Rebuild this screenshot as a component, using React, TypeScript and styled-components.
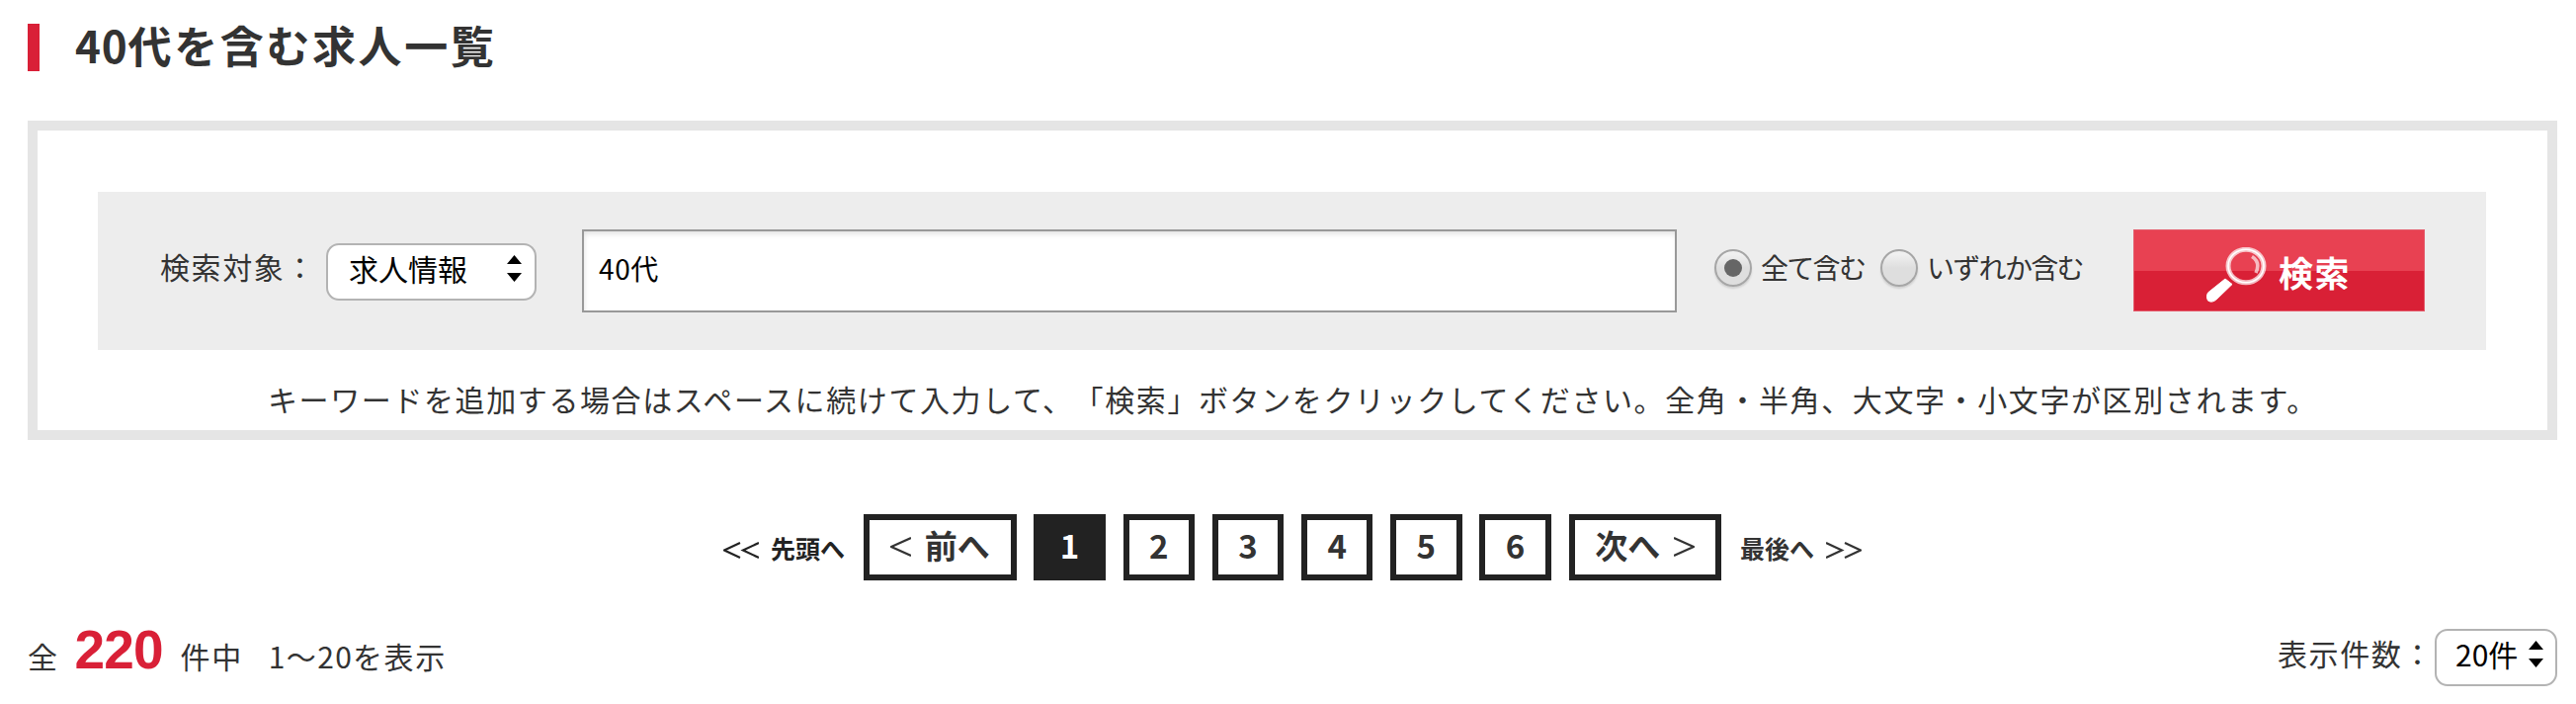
import { useState } from "react";
import styled, { createGlobalStyle } from "styled-components";

const PAGES = [1, 2, 3, 4, 5, 6];

const GlobalStyle = createGlobalStyle`
  * {
    box-sizing: border-box;
  }

  body {
    margin: 0;
    background: #fff;
    color: #333;
    font-family: "Noto Sans CJK JP", sans-serif;
    font-size: 30px;
    letter-spacing: 1.6px;
    text-spacing-trim: space-all;
  }
`;

const Page = styled.main`
  width: 2560px;
  height: 712px;
  margin-left: 28px;
  padding-top: 24px;
  overflow: hidden;
  white-space: nowrap;
`;

const Title = styled.h1`
  height: 48px;
  margin: 0;
  padding-left: 36px;
  border-left: 12px solid #d92037;
  font-size: 44px;
  font-weight: 700;
  line-height: 43px;
  letter-spacing: 2.6px;
`;

const TitleNumber = styled.span`
  letter-spacing: 0.8px;
`;

const SearchPanel = styled.section`
  height: 323px;
  margin-top: 50px;
  padding: 62px 62px 0 61px;
  border: 10px solid #e5e5e5;
`;

const SearchForm = styled.form`
  display: flex;
  align-items: center;
  height: 160px;
  padding-left: 63px;
  background: #ededed;
`;

const Label = styled.label<{ $width: number }>`
  flex: none;
  width: ${({ $width }) => $width}px;
  line-height: 44px;
`;

const TargetLabel = styled(Label)`
  margin-bottom: 10px;
`;

const SelectWrapper = styled.div<{ $width: number; $arrowRight: number }>`
  position: relative;
  flex: none;
  width: ${({ $width }) => $width}px;
  height: 58px;

  svg {
    position: absolute;
    top: 12px;
    right: ${({ $arrowRight }) => $arrowRight}px;
    pointer-events: none;
  }
`;

const StyledSelect = styled.select`
  appearance: none;
  width: 100%;
  height: 100%;
  margin: 0;
  padding: 0 0 8px 21px;
  border: 2px solid #b3b3b3;
  border-radius: 13px;
  background: #fff;
  color: #000;
  font-family: inherit;
  font-size: 30px;
  letter-spacing: 0;
`;

const TargetSelect = styled(SelectWrapper)`
  margin-top: 2px;
`;

const KeywordInput = styled.input`
  flex: none;
  width: 1108px;
  height: 84px;
  margin: 0 0 0 46px;
  padding: 0 15px 6px;
  border: 2px solid #999;
  border-radius: 0;
  outline: none;
  background: #fff;
  box-shadow: inset 0 5px 6px -3px #ddd, inset 3px 0 5px -2px #eee;
  color: #000;
  font-family: inherit;
  font-size: 28px;
  letter-spacing: 0.6px;
`;

const RadioLabel = styled.label<{ $width: number }>`
  display: flex;
  flex: none;
  align-items: center;
  width: ${({ $width }) => $width}px;
  height: 38px;
  margin-bottom: 6px;
  font-size: 28px;
  letter-spacing: -1.7px;
`;

const Radio = styled.input`
  appearance: none;
  display: flex;
  flex: none;
  align-items: center;
  justify-content: center;
  width: 38px;
  height: 38px;
  margin: 0 9px 0 0;
  border: 2px solid #a6a6a6;
  border-radius: 50%;
  background: linear-gradient(#f0f0f0 10%, #dedede 50%, #dedede);
  box-shadow: 0 2px 2px rgb(0 0 0 / 12%);

  &:checked::before {
    content: "";
    width: 18px;
    height: 18px;
    border-radius: 50%;
    background: #666;
  }
`;

const RadioText = styled.span`
  line-height: 34px;
  margin-bottom: 2px;
`;

const SearchButton = styled.button`
  display: flex;
  flex: none;
  width: 295px;
  height: 83px;
  margin: 0 0 1px 43px;
  padding: 17px 0 0 73px;
  border: 1px solid #e45c6c;
  background: linear-gradient(#e84152 0 41px, #d92036 41px);
  color: #fff;
  font-family: inherit;
  font-size: 35px;
  font-weight: 700;
  letter-spacing: 1.5px;
  cursor: pointer;

  span {
    margin: 1px 0 0 12px;
    line-height: 48px;
  }
`;

const Hint = styled.p`
  margin: 27px 0 0 172px;
  line-height: 44px;
`;

const Pagination = styled.nav`
  display: flex;
  align-items: center;
  height: 67px;
  margin: 75px 0 0 704px;
  letter-spacing: 0;
`;

const EdgeLink = styled.a<{ $width: number; $color: string }>`
  display: flex;
  flex: none;
  justify-content: space-between;
  width: ${({ $width }) => $width}px;
  color: ${({ $color }) => $color};
  font-size: 25px;
  font-weight: 700;
  line-height: 36px;
`;

const Chevron = styled.svg`
  flex: none;
  fill: none;
  stroke: currentColor;
  stroke-width: 2.2;
`;

const PageList = styled.div`
  display: flex;
  gap: 17.8px;
  margin: 0 19px;
`;

const PageLink = styled.a<{ $wide?: boolean; $active?: boolean }>`
  display: flex;
  align-items: center;
  justify-content: center;
  gap: 14px;
  width: ${({ $wide }) => ($wide ? 154.6 : 72.4)}px;
  height: 67px;
  padding-bottom: 6px;
  border: 6px solid #222;
  background: ${({ $active }) => ($active ? "#222" : "#fff")};
  color: ${({ $active }) => ($active ? "#fff" : "#333")};
  font-size: 33px;
  font-weight: 700;
  line-height: 40px;
`;

const ResultBar = styled.div`
  display: flex;
  align-items: flex-start;
  justify-content: space-between;
  height: 58px;
  margin-top: 48px;
`;

const Count = styled.p`
  display: flex;
  align-items: baseline;
  margin: 0;
  line-height: 44px;
`;

const Total = styled.strong`
  width: 88px;
  margin: 0 19px 0 16px;
  color: #d92037;
  font-family: "Liberation Sans", sans-serif;
  font-size: 55px;
  letter-spacing: -0.9px;
`;

const Range = styled.span`
  margin-left: 26px;
`;

const Digits = styled.span`
  letter-spacing: 1.2px;
`;

const PerPage = styled.div`
  display: flex;
  margin-top: 1px;

  label {
    padding-top: 2px;
  }

  select {
    padding-left: 19px;
  }
`;

const SelectArrows = () => (
  <svg width="15" height="27" viewBox="0 0 15 27">
    <path d="M7.5 0L15 9H0zM7.5 27L15 18H0z" />
  </svg>
);

const SearchIcon = () => (
  <svg width="61" height="56" viewBox="0 0 61 56" fill="none">
    <ellipse cx="40" cy="19" rx="18" ry="16.7" stroke="#fff" strokeOpacity=".7" strokeWidth="5" />
    <ellipse cx="40" cy="19" rx="18" ry="16.7" stroke="#fff" strokeWidth="1.6" />
    <path d="M46 9.500Q55 15 50 26" stroke="#fff" strokeOpacity=".65" strokeWidth="3.500" />
    <path d="M19 32L26 37.500L11 52Q6 57 1.500 54Q-1 50 1.500 46Z" fill="#fff" stroke="#fff" />
  </svg>
);

// Thin angle marks; `count` draws them side by side.
const Angle = ({
  size,
  count = 1,
  next = false,
}: {
  size: [number, number];
  count?: number;
  next?: boolean;
}) => {
  const [w, h] = size;
  const step = w + 2;
  return (
    <Chevron width={step * count - 2} height={h} style={{ marginTop: count > 1 ? 12 : 5 }}>
      {Array.from({ length: count }, (_, i) => {
        const tip = i * step + (next ? w - 1 : 1);
        const end = i * step + (next ? 0 : w);
        return <path key={i} d={`M${end} 1L${tip} ${h / 2}L${end} ${h - 1}`} />;
      })}
    </Chevron>
  );
};

const App = () => {
  const [keyword, setKeyword] = useState("40代");
  const [mode, setMode] = useState("all");

  return (
    <>
      <GlobalStyle />
      <Page>
        <Title>
          <TitleNumber>40</TitleNumber>代を含む求人一覧
        </Title>

        <SearchPanel>
          <SearchForm onSubmit={(e) => e.preventDefault()}>
            <TargetLabel $width={168}>検索対象：</TargetLabel>
            <TargetSelect $width={213} $arrowRight={15}>
              <StyledSelect>
                <option>求人情報</option>
              </StyledSelect>
              <SelectArrows />
            </TargetSelect>
            <KeywordInput value={keyword} onChange={(e) => setKeyword(e.target.value)} />
            <RadioLabel $width={168} style={{ marginLeft: 38 }}>
              <Radio type="radio" checked={mode === "all"} onChange={() => setMode("all")} />
              <RadioText>全て含む</RadioText>
            </RadioLabel>
            <RadioLabel $width={213}>
              <Radio type="radio" checked={mode === "any"} onChange={() => setMode("any")} />
              <RadioText>いずれか含む</RadioText>
            </RadioLabel>
            <SearchButton type="submit">
              <SearchIcon />
              <span>検索</span>
            </SearchButton>
          </SearchForm>
          <Hint>
            キーワードを追加する場合はスペースに続けて入力して、「検索」ボタンをクリックしてください。全角・半角、大文字・小文字が区別されます。
          </Hint>
        </SearchPanel>

        <Pagination>
          <EdgeLink $width={123} $color="#222">
            <Angle size={[17, 17]} count={2} />
            先頭へ
          </EdgeLink>
          <PageList>
            <PageLink $wide>
              <Angle size={[21, 20]} />
              前へ
            </PageLink>
            {PAGES.map((page) => (
              <PageLink key={page} $active={page === 1}>
                {page}
              </PageLink>
            ))}
            <PageLink $wide>
              次へ
              <Angle size={[21, 20]} next />
            </PageLink>
          </PageList>
          <EdgeLink $width={123} $color="#333">
            最後へ
            <Angle size={[17, 17]} count={2} next />
          </EdgeLink>
        </Pagination>

        <ResultBar>
          <Count>
            全<Total>220</Total>件中
            <Range>
              <Digits>1</Digits>〜<Digits>20</Digits>を表示
            </Range>
          </Count>
          <PerPage>
            <Label $width={159}>表示件数：</Label>
            <SelectWrapper $width={124} $arrowRight={14}>
              <StyledSelect>
                <option>20件</option>
              </StyledSelect>
              <SelectArrows />
            </SelectWrapper>
          </PerPage>
        </ResultBar>
      </Page>
    </>
  );
};

export default App;
